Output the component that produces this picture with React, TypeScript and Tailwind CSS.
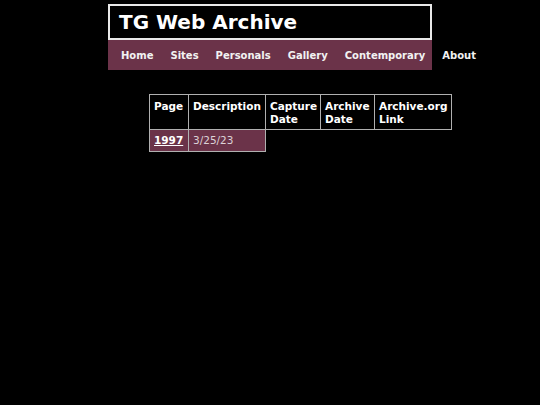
export default function App() {
  const nav = ['Home', 'Sites', 'Personals', 'Gallery', 'Contemporary', 'About']
  const heads = [
    { label: ['Page'], w: 'w-[39px]' },
    { label: ['Description'], w: 'w-[77px]' },
    { label: ['Capture', 'Date'], w: 'w-[55px]' },
    { label: ['Archive', 'Date'], w: 'w-[54px]' },
    { label: ['Archive.org', 'Link'], w: 'w-[77px]' },
  ]

  return (
    <div className="min-h-screen w-full bg-black text-white font-['DejaVu_Sans',sans-serif]">
      <div className="w-[324px] mx-auto pt-[4px]">
        {/* title box */}
        <header className="h-[36px] border-2 border-[#e8e8e8] bg-black pl-[9px] flex items-center">
          <h1 className="text-[20px] font-bold leading-none">TG Web Archive</h1>
        </header>

        {/* nav bar */}
        <nav className="h-[30px] bg-[#6b3349] flex items-center pl-[13px] gap-[17px] whitespace-nowrap">
          {nav.map(n => (
            <a key={n} className="text-[10px] font-bold text-[#f2f2f2]">
              {n}
            </a>
          ))}
        </nav>

        {/* archive table */}
        <div className="pl-[41px] pt-[24px]">
          <table className="border-collapse table-fixed w-[302px] text-[10.5px] leading-[13px]">
            <colgroup>
              {heads.map(h => (
                <col key={h.label.join()} className={h.w} />
              ))}
            </colgroup>
            <thead>
              <tr>
                {heads.map(h => (
                  <th
                    key={h.label.join()}
                    className="border border-[#b0b0b0] px-[4px] pt-[5px] pb-[3px] text-left align-top font-bold"
                  >
                    {h.label.map(l => (
                      <div key={l}>{l}</div>
                    ))}
                  </th>
                ))}
              </tr>
            </thead>
            <tbody>
              <tr>
                <td className="bg-[#6b3349] border border-[#b0b0b0] px-[4px] py-[4px] font-bold underline">1997</td>
                <td className="bg-[#6b3349] border border-[#b0b0b0] px-[4px] py-[4px] text-[#dcd2d7]">3/25/23</td>
              </tr>
            </tbody>
          </table>
        </div>
      </div>
    </div>
  )
}
